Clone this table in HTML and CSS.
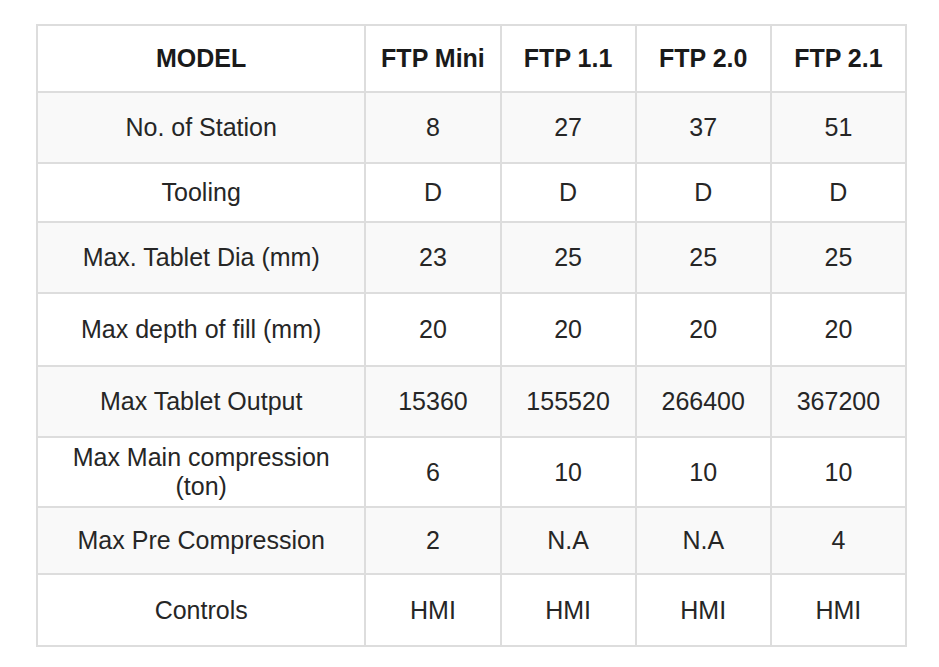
FILE: index.html
```html
<!DOCTYPE html>
<html>
<head>
<meta charset="utf-8">
<link rel="stylesheet" href="styles.css">
</head>
<body>
<div class="wrap">
<table class="spec">
  <colgroup>
    <col class="c-name"><col class="c-val"><col class="c-val"><col class="c-val"><col class="c-val">
  </colgroup>
  <thead>
    <tr class="r-head"><th>MODEL</th><th>FTP Mini</th><th>FTP 1.1</th><th>FTP 2.0</th><th>FTP 2.1</th></tr>
  </thead>
  <tbody>
    <tr class="r1 odd"><td>No. of Station</td><td>8</td><td>27</td><td>37</td><td>51</td></tr>
    <tr class="r2"><td>Tooling</td><td>D</td><td>D</td><td>D</td><td>D</td></tr>
    <tr class="r3 odd"><td>Max. Tablet Dia (mm)</td><td>23</td><td>25</td><td>25</td><td>25</td></tr>
    <tr class="r4"><td>Max depth of fill (mm)</td><td>20</td><td>20</td><td>20</td><td>20</td></tr>
    <tr class="r5 odd"><td>Max Tablet Output</td><td>15360</td><td>155520</td><td>266400</td><td>367200</td></tr>
    <tr class="r6"><td>Max Main compression<br>(ton)</td><td>6</td><td>10</td><td>10</td><td>10</td></tr>
    <tr class="r7 odd"><td>Max Pre Compression</td><td>2</td><td>N.A</td><td>N.A</td><td>4</td></tr>
    <tr class="r8"><td>Controls</td><td>HMI</td><td>HMI</td><td>HMI</td><td>HMI</td></tr>
  </tbody>
</table>
</div>
</body>
</html>
```

FILE: styles.css
```css
html, body {
  margin: 0;
  padding: 0;
  background: #ffffff;
}
.wrap {
  padding: 24px 0 0 36px;
}
.spec {
  border-collapse: collapse;
  table-layout: fixed;
  width: 871px;
  font-family: "Liberation Sans", Arial, sans-serif;
  font-size: 25px;
  line-height: 29px;
  color: #262626;
}
.c-name { width: 328px; }
.c-val { width: 135px; }
.spec th, .spec td {
  border: 2px solid #dddddd;
  text-align: center;
  vertical-align: middle;
  padding: 0 4px;
}
.spec th {
  font-weight: bold;
  color: #1a1a1a;
}
.odd td { background: #f9f9f9; }
.r-head { height: 67px; }
.r1 { height: 71px; }
.r2 { height: 59px; }
.r3 { height: 71px; }
.r4 { height: 73px; }
.r5 { height: 71px; }
.r6 { height: 70px; }
.r7 { height: 67px; }
.r8 { height: 72px; }
```
